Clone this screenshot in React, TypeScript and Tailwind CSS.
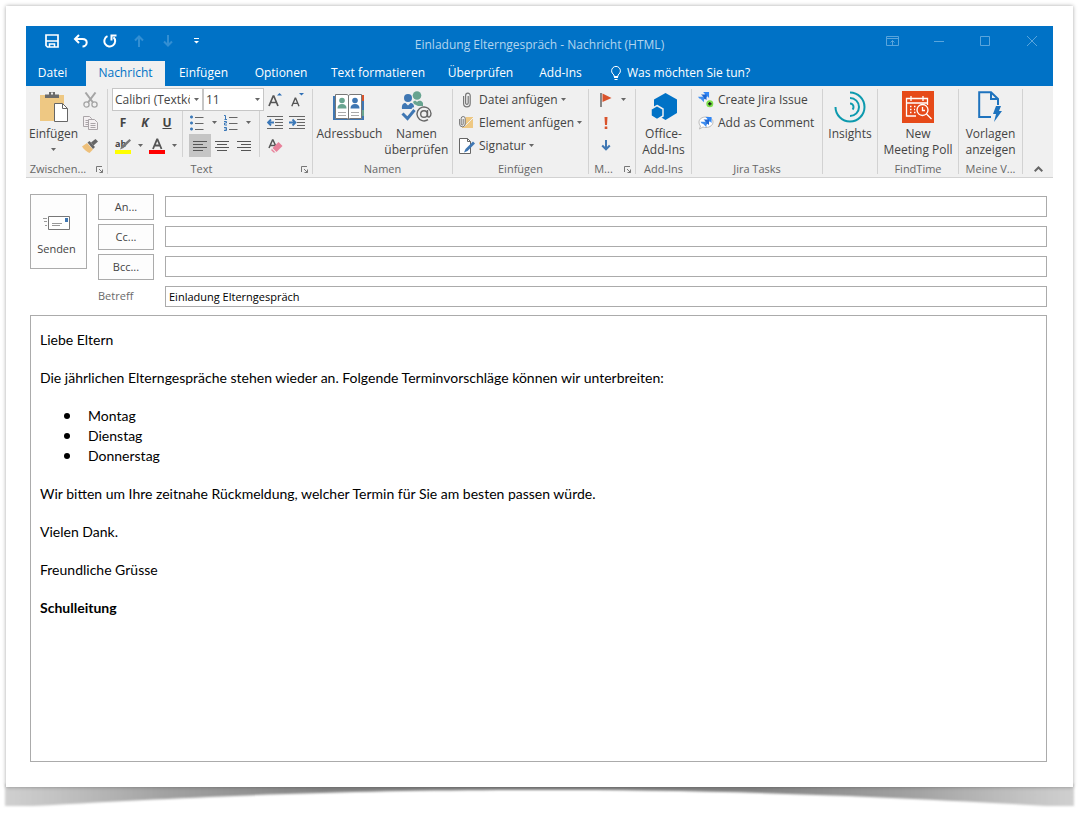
import React from 'react';
import { clsx } from 'clsx';

type IconProps = { className?: string };

const tabs = [
  { name: 'Einfügen', width: 'w-[77px]' },
  { name: 'Optionen', width: 'w-[78px]' },
  { name: 'Text formatieren', width: 'w-[116px]' },
  { name: 'Überprüfen', width: 'w-[89px]' },
  { name: 'Add-Ins', width: 'w-[71px]' },
];
const terms = ['Montag', 'Dienstag', 'Donnerstag'];

function Caret({ className }: IconProps) {
  return (
    <svg width="5" height="3" viewBox="0 0 5 3" className={clsx('shrink-0', className)} aria-hidden="true">
      <path d="M0 0h5L2.500 3z" fill="#666" />
    </svg>
  );
}

/* ---------- Title bar icons ---------- */

function SaveIcon() {
  return (
    <svg width="14" height="14" viewBox="0 0 14 14" fill="none" stroke="#fff">
      <path d="M1 1h12v12H2.500L1 11.500z" strokeWidth="1.700" />
      <path d="M1 7h12" strokeWidth="1.500" />
      <path d="M4.500 13V10h5V13" strokeWidth="1.500" />
    </svg>
  );
}

function UndoIcon() {
  return (
    <svg width="16" height="14" viewBox="0 0 16 14" fill="none" stroke="#fff" strokeWidth="2">
      <path d="M6 1 2 5l4 4" />
      <path d="M2 5h7.500c2.500 0 4.200 1.400 4.200 3.500S12 12.500 9.500 12.500" />
    </svg>
  );
}

function RedoIcon() {
  return (
    <svg width="14" height="14" viewBox="0 0 14 14" fill="none" stroke="#fff" strokeWidth="2">
      <path d="M4.500 2.200A5.400 5.400 0 1 0 10.500 3.200" />
      <path d="M13.500 1.500H8.500V6.500" />
    </svg>
  );
}

function ArrowIcon({ down }: { down?: boolean }) {
  return (
    <svg width="10" height="12" viewBox="0 0 10 12" fill="none" stroke="#338fd3" strokeWidth="2" className={clsx(down && 'rotate-180')}>
      <path d="M5 12V1.500M1 5.500l4-4 4 4" />
    </svg>
  );
}

function CustomizeIcon() {
  return (
    <svg width="7" height="6" viewBox="0 0 7 6" fill="#fff">
      <path d="M1 0h5v1H1zM1 3h5L3.500 5.500z" />
    </svg>
  );
}

function BulbIcon() {
  return (
    <svg width="10" height="14" viewBox="0 0 10 14" fill="none" stroke="#fff">
      <path d="M3 10.500V9C1.500 7.700.600 6.500.600 4.800a4.400 4.400 0 0 1 8.800 0C9.400 6.500 8.500 7.700 7 9v1.500z" />
      <path d="M3 11.500h4M3.500 13.500h3" />
    </svg>
  );
}

/* ---------- Ribbon icons ---------- */

function PasteIcon() {
  return (
    <svg width="30" height="32" viewBox="0 0 30 32">
      <path d="M1 4h24v26H1z" fill="#eec883" />
      <path d="M6 7V3.500h4V1h6v2.500h4V7z" fill="#6b6b6b" />
      <path d="M12 1.500h2v2h-2z" fill="#eee" />
      <path d="M15.500 12.500h8l5 5v13h-13z" fill="#fff" stroke="#666" />
      <path d="M23.500 12.500v5h5" fill="none" stroke="#666" />
    </svg>
  );
}

function CutIcon() {
  return (
    <svg width="15" height="16" viewBox="0 0 15 16" fill="none" stroke="#a5a5a5" strokeWidth="1.300">
      <path d="M2.500.500 10 10.500M12.500.500 5 10.500" strokeWidth="2" />
      <circle cx="3.500" cy="12.500" r="2.600" />
      <circle cx="11.500" cy="12.500" r="2.600" />
    </svg>
  );
}

function CopyIcon() {
  return (
    <svg width="15" height="14" viewBox="0 0 15 14" fill="#f4f0f2" stroke="#aaa5a8">
      <path d="M.500.500h6l2 2v8h-8z" />
      <path d="M2.500 4.500h4M2.500 6.500h3M2.500 8.500h3" />
      <path d="M5.500 3.500h6l3 3v7h-9z" />
      <path d="M7.500 7.500h5M7.500 9.500h5M7.500 11.500h5" />
    </svg>
  );
}

function BrushIcon() {
  return (
    <svg width="16" height="14" viewBox="0 0 16 14">
      <path d="M0 7.500 5 4l6 6.500L7.500 14C5 13 2 10.500 0 7.500z" fill="#eec07a" />
      <path d="m5.500 3.500 2-1.500 5.500 6-2 2z" fill="#666" />
      <path d="m9 3.500 4.500-3.500L16 2.500l-4.500 4z" fill="#666" />
    </svg>
  );
}

function GrowFontIcon({ shrink }: { shrink?: boolean }) {
  return (
    <svg width="14" height="15" viewBox="0 0 14 15" fill="none" stroke="#555">
      <g transform={shrink ? 'translate(1 3) scale(.8)' : undefined}>
        <path d="M1 14 5.200 4h.600L10 14M2.500 10.500h6" strokeWidth="1.700" />
      </g>
      <path d={shrink ? 'M9 1h5l-2.500 2.500z' : 'M9 3.500h5L11.500 1z'} fill="#2f6fb5" stroke="none" />
    </svg>
  );
}

function BulletsIcon() {
  return (
    <svg width="14" height="16" viewBox="0 0 14 16">
      <path d="M1 .500h1l1 1v1l-1 1H1l-1-1v-1zM1 6.500h1l1 1v1l-1 1H1l-1-1v-1zM1 12.500h1l1 1v1l-1 1H1l-1-1v-1z" fill="#3b78b8" />
      <path d="M5 2.500h8.500M5 8.500h8.500M5 14.500h8.500" stroke="#666" />
    </svg>
  );
}

function NumberingIcon() {
  return (
    <svg width="14" height="16" viewBox="0 0 14 16" fill="none">
      <path d="M0 .500h1.500V4M.500 4.500h2.500M0 6.500h2.500V8H.500v2H3M0 12.500h2.500V15.500H0M.500 14h2" stroke="#3b78b8" />
      <path d="M5 2.500h8.500M5 8.500h8.500M5 14.500h8.500" stroke="#666" />
    </svg>
  );
}

function IndentIcon({ increase }: { increase?: boolean }) {
  return (
    <svg width="16" height="13" viewBox="0 0 16 13" fill="none">
      <path d="M0 .500h16M8 3.500h8M8 6.500h8M8 9.500h8M0 12.500h16" stroke="#666" />
      <path d={increase ? 'M0 6.500h6M3.500 3.500l3 3-3 3' : 'M7 6.500H1M4 3.500l-3 3 3 3'} stroke="#3b78b8" strokeWidth="1.800" />
    </svg>
  );
}

function HighlightIcon() {
  return (
    <svg width="16" height="16" viewBox="0 0 16 16" className="overflow-visible">
      <path d="M0 12h16v4H0z" fill="#ff0" />
      <text x="0" y="9" fontSize="9" fontWeight="700" fill="#444">ab</text>
      <path d="m14.500 1 1.500 1.500L8.500 10 5 11.500 6.500 8z" fill="#777" />
    </svg>
  );
}

function FontColorIcon() {
  return (
    <svg width="16" height="16" viewBox="0 0 16 16">
      <path d="M0 12h16v4H0z" fill="#f00" />
      <path d="M4 11 8 1.500h.500L12.500 11M5.500 7.500h5.500" fill="none" stroke="#555" strokeWidth="1.800" />
    </svg>
  );
}

const alignPaths = {
  left: 'M0 .500h14M0 3.500h10M0 6.500h14M0 9.500h10',
  center: 'M0 .500h14M2 3.500h10M0 6.500h14M2 9.500h10',
  right: 'M0 .500h14M4 3.500h10M0 6.500h14M4 9.500h10',
};

function AlignIcon({ side }: { side: keyof typeof alignPaths }) {
  return (
    <svg width="14" height="10" viewBox="0 0 14 10" stroke="#555">
      <path d={alignPaths[side]} />
    </svg>
  );
}

function ClearFormatIcon() {
  return (
    <svg width="15" height="14" viewBox="0 0 15 14">
      <path d="M1 9 4.500 1H5l3 6.500M2.500 6.500h4.500" fill="none" stroke="#555" strokeWidth="1.500" />
      <path d="m10.500 3 4 4-6 6-4-4z" fill="#e8819a" />
      <path d="m3.500 9.500 4 4H5.500l-2-2z" fill="#e8819a" />
    </svg>
  );
}

function LauncherIcon() {
  return (
    <svg width="7" height="7" viewBox="0 0 7 7" fill="none" stroke="#777">
      <path d="M.500 6V.500H6M3 3l3.500 3.500M6.500 3.500v3h-3" />
    </svg>
  );
}

function AddressBookIcon() {
  return (
    <svg width="32" height="28" viewBox="0 0 32 28">
      <path d="M0 3h31v24H0z" fill="#3f77b3" />
      <path d="M28 2h3v6h-3z" fill="#d9532c" />
      <path d="M28 9h3v7h-3z" fill="#3f77b3" />
      <path d="M28 17h3v6h-3z" fill="#68a490" />
      <path d="M2.500 1.500H13c1.500 0 2.500.500 2.500 1.500 0-1 1-1.500 2.500-1.500h10.500v24H18c-1.500 0-2.500.500-2.500 1.500 0-1-1-1.500-2.500-1.500H2.500z" fill="#fff" stroke="#777" />
      <path d="M15.500 3v23" stroke="#777" />
      <circle cx="9" cy="7.500" r="2.800" fill="#68a490" />
      <path d="M4.500 15.500c0-3 1.500-4.500 4.500-4.500s4.500 1.500 4.500 4.500z" fill="#68a490" />
      <circle cx="22" cy="7.500" r="2.800" fill="#3f77b3" />
      <path d="M17.500 15.500c0-3 1.500-4.500 4.500-4.500s4.500 1.500 4.500 4.500z" fill="#3f77b3" />
      <path d="M5 19.500h8M5 22.500h8M18 19.500h8M18 22.500h8" stroke="#aaa" />
    </svg>
  );
}

function CheckNamesIcon() {
  return (
    <svg width="32" height="32" viewBox="0 0 32 32">
      <circle cx="17" cy="4.500" r="4.300" fill="#68a490" />
      <path d="M13 11c1.500-2 3-1 4 0 1.500-1.500 4.500-2 6 1v3h-5l-4-2z" fill="#68a490" />
      <circle cx="8" cy="7" r="4" fill="#3f77b3" />
      <path d="M2 18c-.500-4 1-6 3.500-6L8 14.500l2.500-2.500c2.500 0 4 2 3.500 6z" fill="#3f77b3" />
      <path d="m2.500 21.500 5 5L15 17.500" fill="none" stroke="#f0f0f0" strokeWidth="5" />
      <path d="m2.500 22.500 5 5L14.500 19" fill="none" stroke="#3f77b3" strokeWidth="3" />
      <circle cx="24" cy="23" r="3.300" fill="none" stroke="#666" strokeWidth="1.400" />
      <path d="M27.500 19v6c.500 2 3.500 1 3.500-2.500a7 7 0 1 0-3 6.200" fill="none" stroke="#666" strokeWidth="1.400" />
    </svg>
  );
}

function ClipIcon() {
  return (
    <svg width="16" height="16" viewBox="0 0 16 16" fill="none" stroke="#777" strokeWidth="1.200">
      <path d="M4.600 4v7.500a3.300 3.300 0 0 0 6.600 0V3.500a2.300 2.300 0 0 0-4.600 0v7.500a1.300 1.300 0 0 0 2.600 0V4" />
    </svg>
  );
}

function ItemIcon() {
  return (
    <svg width="16" height="16" viewBox="0 0 16 16">
      <path d="M7 2h7v11H3v-3z" fill="#eec883" />
      <path d="m5 12 9-9" stroke="#f0f0f0" />
      <path d="M.600 4v5a2.800 2.800 0 0 0 5.600 0V3.500a2 2 0 0 0-4 0V9a.900.900 0 0 0 2 0V4" fill="#f0f0f0" stroke="#777" />
    </svg>
  );
}

function SignatureIcon() {
  return (
    <svg width="16" height="16" viewBox="0 0 16 16">
      <path d="M.500.500h8l3 3v12H.500z" fill="#fff" stroke="#666" />
      <path d="M8.500.500v3h3" fill="none" stroke="#666" />
      <path d="M14 3.500 16 5.500 8.500 13 5 14.500 6.500 11z" fill="#3f77b3" />
    </svg>
  );
}

function FlagIcon() {
  return (
    <svg width="12" height="14" viewBox="0 0 12 14">
      <path d="M1 0v14" stroke="#666" strokeWidth="1.500" />
      <path d="m2.500.500 9 4.500-9 4z" fill="#d9532c" />
    </svg>
  );
}

function HighPriorityIcon() {
  return (
    <svg width="4" height="12" viewBox="0 0 4 12" fill="#d9532c">
      <path d="M.500 0h3L3 8H1zM.700 9.500h2.600V12H.700z" />
    </svg>
  );
}

function LowPriorityIcon() {
  return (
    <svg width="10" height="11" viewBox="0 0 10 11" fill="none" stroke="#3f77b3" strokeWidth="2">
      <path d="M5 0v9M1.200 5.500 5 9.300l3.800-3.800" />
    </svg>
  );
}

function OfficeAddInsIcon() {
  return (
    <svg width="28" height="28" viewBox="0 0 28 28">
      <path d="m15.500 0 11.500 6.500V20l-11.500 7L4 20V6.500z" fill="#0072c6" />
      <path d="m7 12.500 6 3.500v7l-6 3.700L1 23v-7z" fill="#0072c6" stroke="#f0f0f0" strokeWidth="1.500" />
    </svg>
  );
}

function JiraArrows() {
  return (
    <g>
      <path d="M6 0h7v7l-2-2-2 2-2.500-2.500L8.500 2.500z" fill="#2f86f6" />
      <path d="M3.500 3h6.500v6.500L8 8 6.500 9.500 4 7l2-2z" fill="#1f66d0" />
      <path d="M0 5.500h7V12L5 10l-2-2-1.500-.500z" fill="#3f8ef0" />
    </g>
  );
}

function CreateIssueIcon() {
  return (
    <svg width="16" height="16" viewBox="0 0 16 16">
      <g transform="scale(.85)"><JiraArrows /></g>
      <circle cx="11.800" cy="11.800" r="3.500" fill="#7be04b" />
      <path d="M11.800 10v3.600M10 11.800h3.600" stroke="#111" strokeWidth="1.200" />
    </svg>
  );
}

function AddCommentIcon() {
  return (
    <svg width="16" height="14" viewBox="0 0 16 14">
      <path d="M8 1c4 0 7 2 7 5s-3 5.500-7 5.500c-1 0-2 0-3-.500L1.500 13l1-3C1.500 9 1 7.500 1 6c0-3 3-5 7-5z" fill="#fff" stroke="#bbb" />
      <g transform="translate(2.500 1) scale(.85)"><JiraArrows /></g>
    </svg>
  );
}

function InsightsIcon() {
  return (
    <svg width="32" height="32" viewBox="0 0 32 32" fill="none" stroke="#0d9aae" strokeWidth="2">
      <path d="M1.500 16A14.500 14.500 0 1 0 16 1.500" />
      <path d="M16 7a9 9 0 0 1 0 18" />
      <path d="M16 12.500a3.500 3.500 0 0 1 3.500 3.500c0 1-.400 2-1 2.500" />
    </svg>
  );
}

function FindTimeIcon() {
  return (
    <svg width="32" height="32" viewBox="0 0 32 32">
      <path d="M0 0h32v32H0z" fill="#e64a19" />
      <g fill="none" stroke="#fff" strokeWidth="1.300">
        <path d="M14 25H4.500V7.500h21V14M4.500 12h21M9 5v5M21 5v5" />
        <circle cx="20.500" cy="19" r="5.500" />
        <path d="m24.500 23 5 5M20.500 16v3.500H23" />
        <path d="M8 15.500h1.500M12 15.500h1.500M8 18.500h1.500M12 18.500h1M8 21.500h1.500M12 21.500h1.500" />
      </g>
    </svg>
  );
}

function TemplatesIcon() {
  return (
    <svg width="24" height="32" viewBox="0 0 24 32">
      <path d="M13 26H1.200V1.200H13L20 8v6" fill="none" stroke="#1e73be" strokeWidth="2" />
      <path d="M13 1.500V8h7" fill="none" stroke="#1e73be" strokeWidth="2" />
      <path d="M18 15h5l-2 5h3l-8 11 2-8h-3z" fill="#1e73be" />
    </svg>
  );
}

function SendIcon() {
  return (
    <svg width="27" height="14" viewBox="0 0 27 14" fill="none">
      <path d="M5.500.500h21v13h-21z" fill="#fff" stroke="#777" />
      <path d="M22 2h3v4h-3z" fill="#3f77b3" />
      <path d="M9 7.500h10M9 9.500h8M0 2.500h4M1 5.500h3M2 9.500h2" stroke="#999" />
    </svg>
  );
}

/* ---------- Ribbon building blocks ---------- */

interface GroupProps {
  label: string;
  width: string;
  launcher?: boolean;
  children: React.ReactNode;
}

function Group({ label, width, launcher, children }: GroupProps) {
  return (
    <div className={clsx('flex shrink-0', width)}>
      <div className="flex min-w-0 flex-1 flex-col justify-between">
        <div className="flex justify-center pt-[2px]">{children}</div>
        <div className="flex h-4 items-center text-[11px] leading-4 text-[#666]">
          <span className="flex-1 text-center whitespace-nowrap">{label}</span>
          {launcher && (
            <button aria-label={`${label} Optionen`} className="mr-1 ml-[6px]">
              <LauncherIcon />
            </button>
          )}
        </div>
      </div>
      <div className="mt-[3px] h-[85px] w-px bg-[#d2d2d2]" />
    </div>
  );
}

function BigButton({ icon, lines, caret }: { icon: React.ReactNode; lines: string[]; caret?: boolean }) {
  return (
    <button className="flex flex-col items-center px-px leading-4 whitespace-nowrap">
      <span className="flex h-[38px] items-center">{icon}</span>
      {lines.map((line) => (
        <span key={line}>{line}</span>
      ))}
      {caret && <Caret className="mt-[6px]" />}
    </button>
  );
}

function SmallButton({ icon, label, caret }: { icon: React.ReactNode; label: string; caret?: boolean }) {
  return (
    <button className="flex h-[23px] items-center whitespace-nowrap">
      <span className="flex w-5">{icon}</span>
      {label}
      {caret && <Caret className="ml-[3px]" />}
    </button>
  );
}

function Tool({ label, active, children }: { label: string; active?: boolean; children: React.ReactNode }) {
  return (
    <button aria-label={label} className={clsx('flex h-[23px] w-[22px] shrink-0 items-center justify-center', active && 'bg-[#c5c5c5]')}>
      {children}
    </button>
  );
}

function CaretTool({ label }: { label: string }) {
  return (
    <button aria-label={label} className="flex h-[23px] w-3 shrink-0 items-center justify-center">
      <Caret />
    </button>
  );
}

function Divider() {
  return <div className="h-[23px] w-px bg-[#d2d2d2]" />;
}

function RibbonSelect({ label, value, width }: { label: string; value: string; width: string }) {
  return (
    <div className={clsx('relative', width)}>
      <select aria-label={label} className="block h-[23px] w-full appearance-none border border-[#c6c6c6] bg-white pr-3 pl-[2px] text-[12px]">
        <option>{value}</option>
      </select>
      <Caret className="pointer-events-none absolute top-[10px] right-1" />
    </div>
  );
}

function TextGroup() {
  return (
    <div className="flex w-full flex-col pl-1">
      <div className="flex">
        <RibbonSelect label="Schriftart" value="Calibri (Textkörper)" width="w-[91px]" />
        <RibbonSelect label="Schriftgrad" value="11" width="w-[61px]" />
        <Tool label="Schrift vergrößern"><GrowFontIcon /></Tool>
        <Tool label="Schrift verkleinern"><GrowFontIcon shrink /></Tool>
      </div>
      <div className="flex">
        <div className="flex w-[70px]">
          <Tool label="Fett"><span className="font-bold">F</span></Tool>
          <Tool label="Kursiv"><span className="font-bold italic">K</span></Tool>
          <Tool label="Unterstrichen"><span className="font-bold underline">U</span></Tool>
        </div>
        <Divider />
        <div className="flex w-[76px] pl-[3px]">
          <Tool label="Aufzählung"><BulletsIcon /></Tool>
          <CaretTool label="Aufzählungszeichen wählen" />
          <Tool label="Nummerierung"><NumberingIcon /></Tool>
          <CaretTool label="Nummerierung wählen" />
        </div>
        <Divider />
        <div className="flex pl-1">
          <Tool label="Einzug verkleinern"><IndentIcon /></Tool>
          <Tool label="Einzug vergrößern"><IndentIcon increase /></Tool>
        </div>
      </div>
      <div className="flex">
        <div className="flex w-[70px]">
          <Tool label="Texthervorhebung"><HighlightIcon /></Tool>
          <CaretTool label="Hervorhebungsfarbe wählen" />
          <Tool label="Schriftfarbe"><FontColorIcon /></Tool>
          <CaretTool label="Schriftfarbe wählen" />
        </div>
        <Divider />
        <div className="flex w-[76px] pl-[6px]">
          <Tool label="Linksbündig" active><AlignIcon side="left" /></Tool>
          <Tool label="Zentriert"><AlignIcon side="center" /></Tool>
          <Tool label="Rechtsbündig"><AlignIcon side="right" /></Tool>
        </div>
        <Divider />
        <div className="flex pl-1">
          <Tool label="Formatierung löschen"><ClearFormatIcon /></Tool>
        </div>
      </div>
    </div>
  );
}

function Ribbon() {
  return (
    <div className="flex h-[92px] overflow-hidden border-b border-[#d2d2d2] bg-[#f0f0f0] text-[12px] text-[#444]">
      <Group label="Zwischen..." width="w-[82px]" launcher>
        <div className="flex w-full pl-[2px]">
          <BigButton icon={<PasteIcon />} lines={['Einfügen']} caret />
          <div className="flex flex-col">
            <Tool label="Ausschneiden"><CutIcon /></Tool>
            <Tool label="Kopieren"><CopyIcon /></Tool>
            <Tool label="Format übertragen"><BrushIcon /></Tool>
          </div>
        </div>
      </Group>
      <Group label="Text" width="w-[205px]" launcher>
        <TextGroup />
      </Group>
      <Group label="Namen" width="w-[140px]">
        <BigButton icon={<AddressBookIcon />} lines={['Adressbuch']} />
        <BigButton icon={<CheckNamesIcon />} lines={['Namen', 'überprüfen']} />
      </Group>
      <Group label="Einfügen" width="w-[136px]">
        <div className="flex w-full flex-col items-start pl-[6px]">
          <SmallButton icon={<ClipIcon />} label="Datei anfügen" caret />
          <SmallButton icon={<ItemIcon />} label="Element anfügen" caret />
          <SmallButton icon={<SignatureIcon />} label="Signatur" caret />
        </div>
      </Group>
      <Group label="M..." width="w-[47px]" launcher>
        <div className="flex w-full flex-col pl-[6px]">
          <div className="flex">
            <Tool label="Nachverfolgung"><FlagIcon /></Tool>
            <CaretTool label="Nachverfolgung wählen" />
          </div>
          <Tool label="Wichtigkeit: hoch"><HighPriorityIcon /></Tool>
          <Tool label="Wichtigkeit: niedrig"><LowPriorityIcon /></Tool>
        </div>
      </Group>
      <Group label="Add-Ins" width="w-[56px]">
        <BigButton icon={<OfficeAddInsIcon />} lines={['Office-', 'Add-Ins']} />
      </Group>
      <Group label="Jira Tasks" width="w-[131px]">
        <div className="flex w-full flex-col items-start pl-[6px]">
          <SmallButton icon={<CreateIssueIcon />} label="Create Jira Issue" />
          <SmallButton icon={<AddCommentIcon />} label="Add as Comment" />
        </div>
      </Group>
      <Group label="" width="w-[55px]">
        <BigButton icon={<InsightsIcon />} lines={['Insights']} />
      </Group>
      <Group label="FindTime" width="w-[81px]">
        <BigButton icon={<FindTimeIcon />} lines={['New', 'Meeting Poll']} />
      </Group>
      <Group label="Meine V..." width="w-[64px]">
        <BigButton icon={<TemplatesIcon />} lines={['Vorlagen', 'anzeigen']} />
      </Group>
      <div className="flex flex-1 items-end justify-center pb-[5px]">
        <button aria-label="Menüband reduzieren">
          <svg width="9" height="6" viewBox="0 0 9 6" fill="none" stroke="#666" strokeWidth="2">
            <path d="M.700 5.200 4.500 1.500l3.800 3.700" />
          </svg>
        </button>
      </div>
    </div>
  );
}

function TitleBar() {
  return (
    <header className="bg-[#0072c6] text-[12px] text-white">
      <div className="relative flex h-[35px] items-center justify-between pr-[15px] pl-[19px]">
        <div className="flex h-[29px] items-center gap-[14px] self-start">
          <button aria-label="Speichern"><SaveIcon /></button>
          <button aria-label="Rückgängig"><UndoIcon /></button>
          <button aria-label="Wiederholen"><RedoIcon /></button>
          <button aria-label="Vorheriges Element" className="ml-[3px]"><ArrowIcon /></button>
          <button aria-label="Nächstes Element" className="ml-[5px]"><ArrowIcon down /></button>
          <button aria-label="Symbolleiste anpassen" className="ml-[6px]"><CustomizeIcon /></button>
        </div>
        <h1 className="pointer-events-none absolute inset-x-0 pt-[2px] text-center text-[#b3d5ee]">Einladung Elterngespräch - Nachricht (HTML)</h1>
        <div className="flex h-[29px] items-center self-start text-[#5aa5dc]">
          <button aria-label="Menübandoptionen" className="mr-[35px]">
            <svg width="13" height="10" viewBox="0 0 13 10" fill="none" stroke="currentColor">
              <path d="M.500.500h12v9H.500zM.500 2.500h12M6.500 9V4.500M4.500 6.500l2-2 2 2" />
            </svg>
          </button>
          <button aria-label="Minimieren" className="mr-9">
            <svg width="10" height="10" viewBox="0 0 10 10" stroke="currentColor"><path d="M0 5.500h10" /></svg>
          </button>
          <button aria-label="Maximieren" className="mr-9">
            <svg width="10" height="10" viewBox="0 0 10 10" fill="none" stroke="currentColor"><path d="M.500.500h9v9h-9z" /></svg>
          </button>
          <button aria-label="Schließen">
            <svg width="12" height="12" viewBox="0 0 12 12" stroke="currentColor"><path d="m1 1 10 10M11 1 1 11" /></svg>
          </button>
        </div>
      </div>
      <nav className="flex h-[25px] items-stretch whitespace-nowrap">
        <button className="w-[60px] pr-[7px] pb-[2px]">Datei</button>
        <button className="w-[79px] bg-[#f0f0f0] pb-[2px] text-[#0072c6]">Nachricht</button>
        {tabs.map((tab) => (
          <button key={tab.name} className={clsx('pb-[2px]', tab.width)}>{tab.name}</button>
        ))}
        <button className="flex items-center gap-[6px] pb-[2px] pl-[15px]">
          <BulbIcon />
          Was möchten Sie tun?
        </button>
      </nav>
    </header>
  );
}

function MessageForm() {
  return (
    <form className="pt-4 pr-[6px] pl-1 text-[11px] text-[#444]" onSubmit={(e) => e.preventDefault()}>
      <div className="flex items-start gap-[11px]">
        <button type="submit" className="flex h-[75px] w-[57px] flex-col items-center gap-[7px] border border-[#ababab] bg-[#fdfdfd] pt-[21px] pr-1">
          <SendIcon />
          <span className="leading-6">Senden</span>
        </button>
        <div className="flex flex-1 flex-col gap-1">
          {['An...', 'Cc...', 'Bcc...'].map((name) => (
            <div key={name} className="flex items-start gap-[11px]">
              <button type="button" className="h-[26px] w-14 border border-[#ababab] bg-[#fdfdfd]">{name}</button>
              <input aria-label={name} className="mt-[2px] h-[21px] min-w-0 flex-1 border border-[#ababab] px-[3px] text-black outline-none" />
            </div>
          ))}
          <div className="flex h-[26px] items-start gap-[11px]">
            <label htmlFor="subject" className="w-14 leading-6 text-[#6a6a6a]">Betreff</label>
            <input id="subject" defaultValue="Einladung Elterngespräch" className="mt-[2px] h-[21px] min-w-0 flex-1 border border-[#ababab] px-[3px] text-black outline-none" />
          </div>
        </div>
      </div>
      <div
        role="textbox"
        aria-label="Nachricht"
        className="mt-[5px] min-h-[447px] border border-[#ababab] px-[9px] pt-[14px] font-[Lato,sans-serif] text-[14px] leading-[19px] text-black"
      >
        <p className="mb-[19px]">Liebe Eltern</p>
        <p className="mb-[19px]">Die jährlichen Elterngespräche stehen wieder an. Folgende Terminvorschläge können wir unterbreiten:</p>
        <ul className="mb-[18px] leading-5">
          {terms.map((term) => (
            <li key={term} className="flex items-center pl-6">
              <span className="mr-[18px] size-[6px] rounded-full bg-black" />
              {term}
            </li>
          ))}
        </ul>
        <p className="mb-[19px]">Wir bitten um Ihre zeitnahe Rückmeldung, welcher Termin für Sie am besten passen würde.</p>
        <p className="mb-[19px]">Vielen Dank.</p>
        <p className="mb-[19px]">Freundliche Grüsse</p>
        <p className="font-bold">Schulleitung</p>
      </div>
    </form>
  );
}

function PaperShadow() {
  return (
    <svg className="block h-[29px] w-full overflow-visible" viewBox="0 0 1067 29" preserveAspectRatio="none" aria-hidden="true">
      <defs>
        <linearGradient id="paper" x1="0" x2="1" y1="0" y2="0">
          <stop offset="0" stopColor="#d0d0d0" />
          <stop offset=".05" stopColor="#c2c2c2" />
          <stop offset=".15" stopColor="#a2a2a2" />
          <stop offset=".3" stopColor="#858585" />
          <stop offset=".7" stopColor="#858585" />
          <stop offset=".85" stopColor="#a2a2a2" />
          <stop offset=".95" stopColor="#c2c2c2" />
          <stop offset="1" stopColor="#d0d0d0" />
        </linearGradient>
        <filter id="soft" x="-2%" y="-30%" width="104%" height="160%">
          <feGaussianBlur stdDeviation="1.2" />
        </filter>
      </defs>
      <path d="M-1-3H1068V19H1040C820 6 680 3 533.500 3S247 6 27 19H-1z" fill="url(#paper)" filter="url(#soft)" />
    </svg>
  );
}

export default function App() {
  return (
    <div className="min-h-screen bg-white pt-[6px] pr-[14px] pl-[6px] font-['Open_Sans','Noto_Sans',sans-serif]">
      <main className="relative z-10 bg-white px-5 pt-5 pb-[25px] shadow-[0_0_4px_rgba(0,0,0,0.35)]">
        <TitleBar />
        <Ribbon />
        <MessageForm />
      </main>
      <PaperShadow />
    </div>
  );
}
